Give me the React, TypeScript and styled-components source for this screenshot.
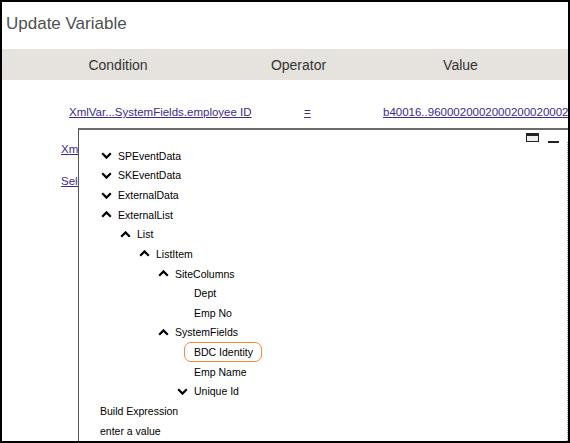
import React from "react";
import styled, { createGlobalStyle } from "styled-components";

const Global = createGlobalStyle`
  html, body { margin: 0; padding: 0; background: #fff; }
  body { font-family: "Liberation Sans", Arial, sans-serif; }
`;

const Frame = styled.div`
  position: relative;
  width: 570px;
  height: 443px;
  box-sizing: border-box;
  border: 2px solid #000;
  background: #fff;
  overflow: hidden;
`;

const Title = styled.div`
  font-size: 17px;
  line-height: 20px;
  color: #505050;
  padding: 12px 0 15px 4px;
`;

const HeaderBar = styled.div`
  display: grid;
  grid-template-columns: 232px 129px 195px 1fr;
  align-items: center;
  height: 31px;
  background: #e6e3de;
  font-size: 14px;
  color: #333;
`;

const HeaderCell = styled.div`
  text-align: center;
`;

const Rows = styled.div`
  padding-top: 20px;
`;

const Row = styled.div<{ $offset: number; $gap: number }>`
  display: grid;
  grid-template-columns: ${(p) => p.$offset}px 235px 79px 1fr;
  align-items: center;
  height: 22px;
  margin-top: ${(p) => p.$gap}px;
`;

const Cell = styled.div`
  min-width: 0;
  overflow: hidden;
  white-space: nowrap;
`;

const Link = styled.a`
  font-size: 11.5px;
  color: #3d2a8f;
  text-decoration: underline;
  white-space: nowrap;
  cursor: pointer;
`;

const Popup = styled.div`
  position: absolute;
  left: 76px;
  top: 126px;
  right: 0;
  bottom: 0;
  display: flex;
  background: #fff;
  border-top: 2px solid #6b6b6b;
  border-left: 1px solid #555;
`;

const PopupBody = styled.div`
  flex: 1;
  display: flex;
  flex-direction: column;
`;

const Toolbar = styled.div`
  display: flex;
  justify-content: flex-end;
  align-items: flex-start;
  gap: 9px;
  height: 16px;
  box-sizing: border-box;
  padding: 3px 8px 0 0;
`;

const MinusIcon = styled.span`
  display: block;
  width: 11px;
  height: 2px;
  margin-top: 8px;
  background: #222;
`;

const ScrollEdge = styled.div`
  width: 0;
  margin-top: 12px;
  border-left: 1px dotted #9a9a9a;
`;

const TreeRow = styled.div<{ $indent: number }>`
  display: flex;
  align-items: center;
  height: 19.64px;
  padding-left: ${(p) => p.$indent}px;
  font-size: 10.5px;
  color: #000;
  white-space: nowrap;
`;

const ChevronSlot = styled.span`
  display: flex;
  align-items: center;
  width: 11px;
  margin-right: 6px;
`;

const Label = styled.span<{ $highlight?: boolean }>`
  line-height: 14px;
  ${(p) =>
    p.$highlight
      ? `
    border: 1px solid #f0883e;
    border-radius: 7px;
    padding: 2px 8px 2px 9px;
    margin-left: -10px;
  `
      : ""}
`;

type Chev = "up" | "down" | "none" | "bare";

const Chevron = ({ dir }: { dir: "up" | "down" }) => (
  <svg width="11" height="7" viewBox="0 0 11 7">
    <path
      d={dir === "down" ? "M1.2 1.2 L5.5 5.6 L9.8 1.2" : "M1.2 5.8 L5.5 1.4 L9.8 5.8"}
      fill="none"
      stroke="#000"
      strokeWidth="2.2"
    />
  </svg>
);

const WindowIcon = () => (
  <svg width="13" height="9" viewBox="0 0 13 9">
    <rect x="0.5" y="0.5" width="12" height="8" fill="#eee" stroke="#222" />
    <rect x="0" y="0" width="13" height="3" fill="#222" />
  </svg>
);

const tree: { label: string; indent: number; chev: Chev; hl?: boolean }[] = [
  { label: "SPEventData", indent: 22, chev: "down" },
  { label: "SKEventData", indent: 22, chev: "down" },
  { label: "ExternalData", indent: 22, chev: "down" },
  { label: "ExternalList", indent: 22, chev: "up" },
  { label: "List", indent: 41, chev: "up" },
  { label: "ListItem", indent: 60, chev: "up" },
  { label: "SiteColumns", indent: 79, chev: "up" },
  { label: "Dept", indent: 98, chev: "none" },
  { label: "Emp No", indent: 98, chev: "none" },
  { label: "SystemFields", indent: 79, chev: "up" },
  { label: "BDC Identity", indent: 98, chev: "none", hl: true },
  { label: "Emp Name", indent: 98, chev: "none" },
  { label: "Unique Id", indent: 98, chev: "down" },
  { label: "Build Expression", indent: 21, chev: "bare" },
  { label: "enter a value", indent: 21, chev: "bare" },
];

export default function App() {
  return (
    <>
      <Global />
      <Frame>
        <Title>Update Variable</Title>
        <HeaderBar>
          <HeaderCell>Condition</HeaderCell>
          <HeaderCell>Operator</HeaderCell>
          <HeaderCell>Value</HeaderCell>
        </HeaderBar>
        <Rows>
          <Row $offset={67} $gap={0}>
            <span />
            <Cell>
              <Link>XmlVar...SystemFields.employee ID</Link>
            </Cell>
            <Cell>
              <Link>=</Link>
            </Cell>
            <Cell>
              <Link>b40016..9600020002000200020002000200</Link>
            </Cell>
          </Row>
          <Row $offset={59} $gap={15}>
            <span />
            <Cell>
              <Link>XmlVar...SystemFields</Link>
            </Cell>
            <span />
            <span />
          </Row>
          <Row $offset={59} $gap={10}>
            <span />
            <Cell>
              <Link>Select a value</Link>
            </Cell>
            <span />
            <span />
          </Row>
        </Rows>
        <Popup>
          <PopupBody>
            <Toolbar>
              <WindowIcon />
              <MinusIcon />
            </Toolbar>
            {tree.map((t) => (
              <TreeRow key={t.label} $indent={t.indent}>
                {t.chev !== "bare" && (
                  <ChevronSlot>
                    {t.chev === "up" || t.chev === "down" ? <Chevron dir={t.chev} /> : null}
                  </ChevronSlot>
                )}
                <Label $highlight={t.hl}>{t.label}</Label>
              </TreeRow>
            ))}
          </PopupBody>
          <ScrollEdge />
        </Popup>
      </Frame>
    </>
  );
}
